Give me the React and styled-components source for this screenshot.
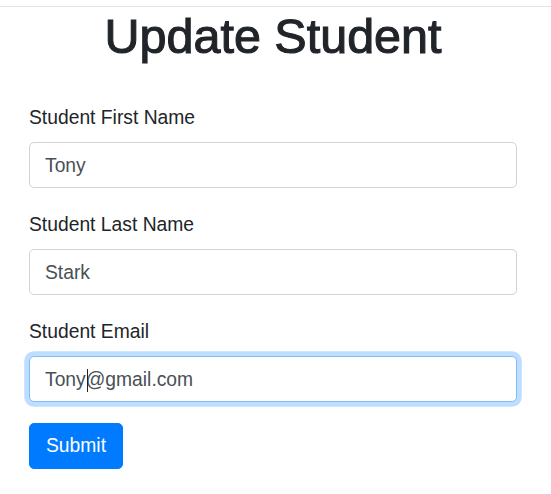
import React from 'react'
import styled, { createGlobalStyle, css } from 'styled-components'

const GlobalStyle = createGlobalStyle`
    body {
        margin: 0;
        background: #ffffff;
        font-family: "Liberation Sans", Arial, Helvetica, sans-serif;
        color: #212529;
    }
`

const Page = styled.div`
    width: 551px;
    min-height: 494px;
    box-sizing: border-box;
    padding-top: 6px;
`

const Rule = styled.div`
    border-top: 1px solid #e3e3e3;
`

const Container = styled.div`
    padding: 0 34px 0 29px;
`

const Title = styled.h1`
    margin: 0;
    font-size: 48.5px;
    font-weight: 500;
    line-height: 1.2;
    text-align: center;
    color: #212529;
    -webkit-text-stroke: 1.1px #212529;
`

const Form = styled.form`
    margin-top: 38px;
    display: flex;
    flex-direction: column;
`

const Group = styled.div`
    margin-bottom: 22px;
    display: flex;
    flex-direction: column;
`

const Label = styled.label`
    font-size: 19.3px;
    line-height: 29px;
    margin-bottom: 10px;
    color: #212529;
`

const Field = styled.div`
    position: relative;
`

const Input = styled.input`
    display: block;
    width: 100%;
    height: 46px;
    box-sizing: border-box;
    padding: 2px 15px 0;
    font-family: inherit;
    font-size: 19.3px;
    color: #495057;
    background: #ffffff;
    border: 1px solid #ced4da;
    border-radius: 5px;
    outline: none;

    ${({ $focused }) => $focused && css`
        border-color: #80bdff;
        box-shadow: 0 0 0 4.8px rgba(0, 123, 255, 0.25);
    `}
`

const Caret = styled.span`
    position: absolute;
    left: ${({ $x }) => $x}px;
    top: 13px;
    width: 1px;
    height: 23px;
    background: #212529;
`

const Button = styled.button`
    align-self: flex-start;
    height: 46px;
    margin-top: -1px;
    padding: 0 16px;
    font-family: inherit;
    font-size: 19.3px;
    color: #ffffff;
    background: #007bff;
    border: 1px solid #007bff;
    border-radius: 5px;
    cursor: pointer;
`

const fields = [
    { label: 'Student First Name', value: 'Tony' },
    { label: 'Student Last Name', value: 'Stark' },
    { label: 'Student Email', value: 'Tony@gmail.com', focused: true, caret: 58 },
]

function App() {
    return (
        <Page>
            <GlobalStyle />
            <Rule />
            <Container>
                <Title>Update Student</Title>
                <Form onSubmit={(e) => e.preventDefault()}>
                    {fields.map((f) => (
                        <Group key={f.label}>
                            <Label>{f.label}</Label>
                            <Field>
                                <Input $focused={f.focused} defaultValue={f.value} />
                                {f.caret && <Caret $x={f.caret} />}
                            </Field>
                        </Group>
                    ))}
                    <Button type="submit">Submit</Button>
                </Form>
            </Container>
        </Page>
    )
}

export default App
